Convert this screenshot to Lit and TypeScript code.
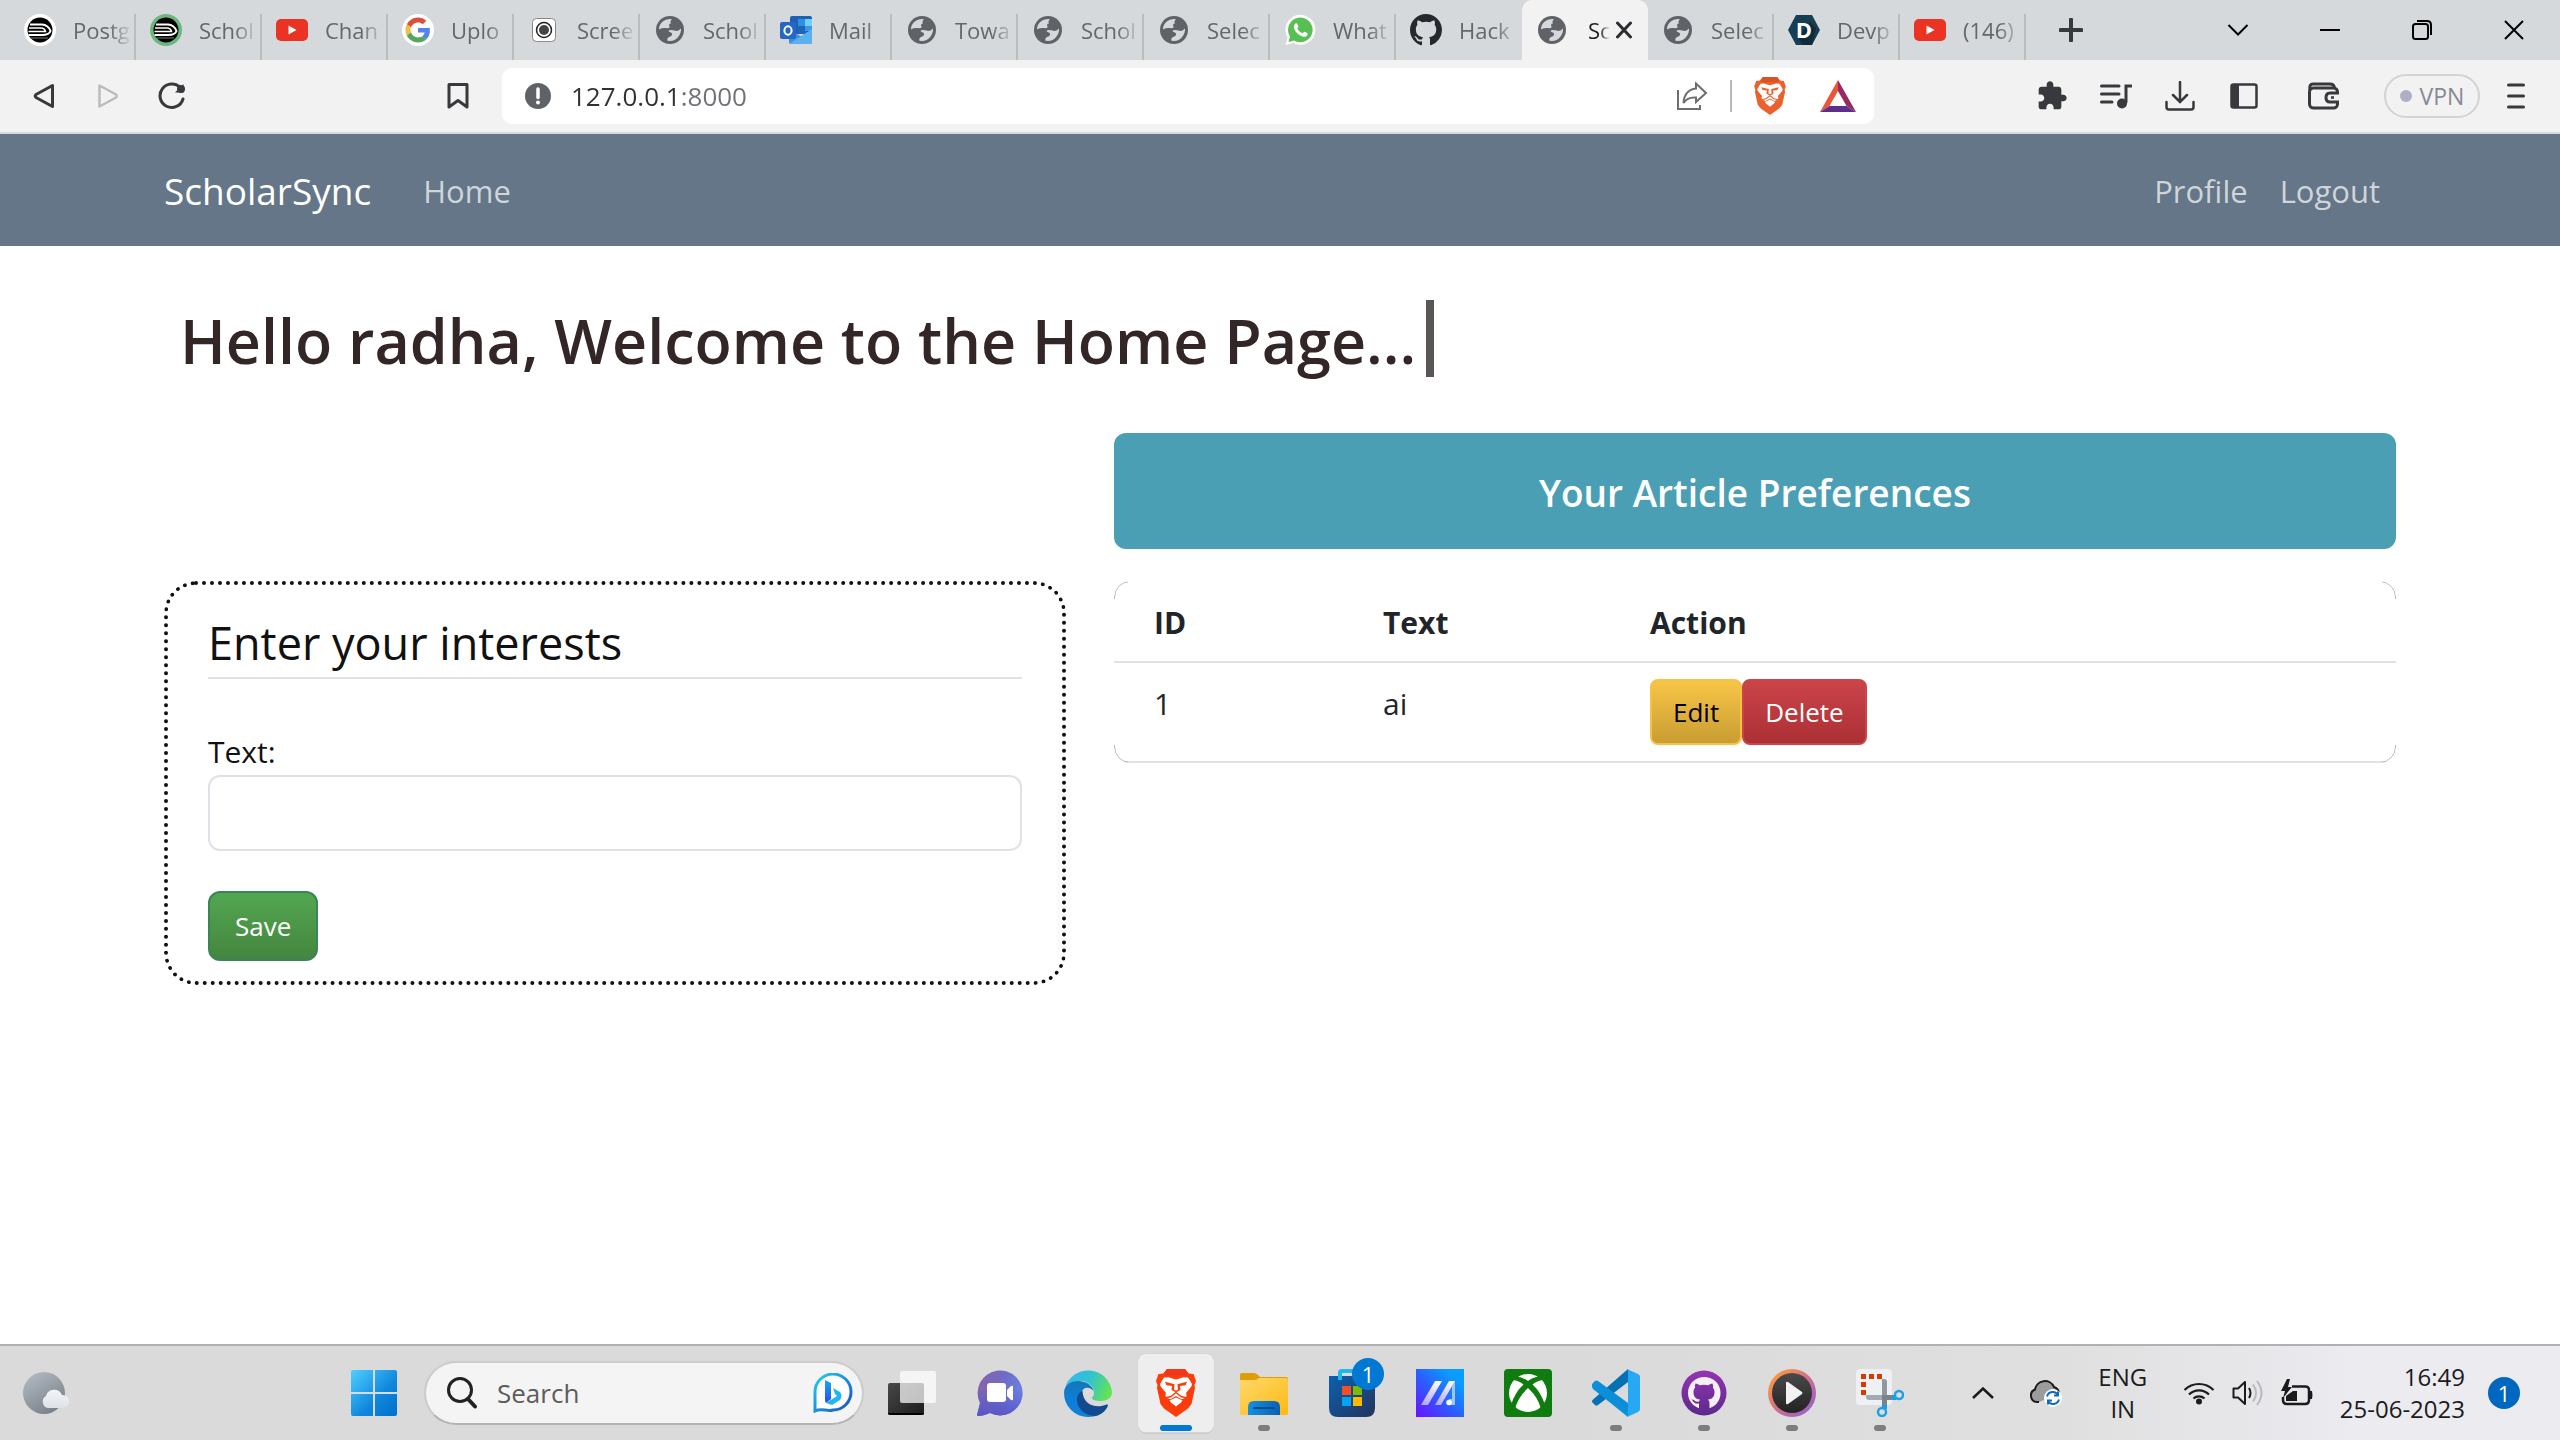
import { LitElement, html, svg, css, type SVGTemplateResult, type TemplateResult } from "lit";
import { customElement, state } from "lit/decorators.js";
import { classMap } from "lit/directives/class-map.js";

const icon = (w: number, h: number, body: SVGTemplateResult, box = `0 0 ${w} ${h}`): TemplateResult =>
  html`<svg width=${w} height=${h} viewBox=${box} fill="none" aria-hidden="true">${body}</svg>`;

/* ---------- shared marks ---------- */

const lionHalf = (fill: string) => svg`
  <path d="M20 10.500L23.500 9.500L27.500 8.300L32 8.500L36 15Q36 17 34.500 18.500L30 24Q31.500 27.500 29 29L25.500 30.200L20 27Z" fill="#fff"/>
  <path d="M20 28.500L26.500 31.500L25 33.500L20 37.500Z" fill="#fff"/>
  <path d="M23 14.800L31 12.800L29.500 16.300L24 17L24.500 21L20 23.500V21.800L22 20.500L21.500 15Z" fill=${fill}/>
  <path d="M20 23.500L25 27.500L31 29" stroke=${fill} stroke-width="1.500"/>`;

const lion = (w: number, h: number, fill: string, crown: string) =>
  icon(w, h, svg`
    <path d="M11 0H29L32.500 4.500L37.500 5L40 12L38.500 16L39 19L35.500 35L32 39.500L20 48L8 39.500L4.500 35L1 19L1.500 16L0 12L2.500 5L7.500 4.500Z" fill=${fill}/>
    <path d="M11 0H29L32.500 4.500L28 7L20 6L12 7L7.500 4.500Z" fill=${crown}/>
    ${lionHalf(fill)}
    <g transform="matrix(-1 0 0 1 40 0)">${lionHalf(fill)}</g>`, "0 0 40 48");

const octocat = svg`<path d="M8 0C3.580 0 0 3.580 0 8c0 3.540 2.290 6.530 5.470 7.590.4.070.550-.170.550-.380 0-.190-.010-.820-.010-1.490-2.010.370-2.530-.490-2.690-.940-.090-.230-.480-.940-.820-1.130-.280-.150-.680-.520-.010-.530.630-.010 1.080.580 1.230.820.720 1.210 1.870.870 2.330.660.070-.520.280-.870.510-1.070-1.780-.200-3.640-.890-3.640-3.950 0-.870.310-1.590.820-2.150-.080-.200-.360-1.020.080-2.120 0 0 .670-.210 2.200.820.640-.180 1.320-.270 2-.270s1.360.090 2 .270c1.530-1.040 2.200-.820 2.200-.820.440 1.100.160 1.920.080 2.120.510.560.820 1.270.820 2.150 0 3.070-1.870 3.750-3.650 3.950.290.250.540.730.540 1.480 0 1.070-.010 1.930-.010 2.200 0 .210.150.460.550.380A8.010 8.010 0 0 0 16 8c0-4.420-3.580-8-8-8z"/>`;

/* ---------- tab icons ---------- */

const train = (ring: string) => icon(32, 32, svg`
  <circle cx="16" cy="16" r="16" fill=${ring}/>
  <circle cx="16" cy="16" r="12.500" fill="#000"/>
  <path d="M6 10.500H18C22 10.500 25.500 13.500 26.500 17C25.500 20 22 21 18 21H4.500" stroke="#fff" stroke-width="2"/>
  <path d="M5 14H17C20 14 21 15.500 21.500 17.500H4.500" stroke="#fff" stroke-width="1.500"/>
  <path d="M6.500 24H24" stroke="#777" stroke-width="1"/>`);

const youtube = icon(32, 32, svg`
  <rect x="0" y="5" width="32" height="22" rx="5" fill="#ea3323"/>
  <path d="M12.500 11.500V20.500L20.500 16Z" fill="#fff"/>`);

const google = icon(32, 32, svg`
  <circle cx="16" cy="16" r="16" fill="#fff"/>
  <g transform="translate(3.500 3.500) scale(.52)">
    <path fill="#d95040" d="M24 9.500c3.540 0 6.710 1.220 9.210 3.600l6.850-6.850C35.900 2.380 30.470 0 24 0 14.620 0 6.510 5.380 2.560 13.220l7.980 6.190C12.430 13.720 17.740 9.500 24 9.500z"/>
    <path fill="#5383ec" d="M46.980 24.550c0-1.570-.15-3.090-.38-4.550H24v9.020h12.940c-.58 2.960-2.260 5.480-4.780 7.180l7.730 6c4.510-4.180 7.090-10.360 7.090-17.650z"/>
    <path fill="#f2be42" d="M10.530 28.590A14.500 14.500 0 0 1 9.770 24c0-1.600.27-3.140.76-4.590l-7.980-6.190A23.900 23.900 0 0 0 0 24c0 3.880.92 7.540 2.560 10.780z"/>
    <path fill="#58a55c" d="M24 48c6.480 0 11.930-2.130 15.890-5.810l-7.730-6c-2.150 1.450-4.920 2.300-8.160 2.300-6.260 0-11.570-4.220-13.470-9.910l-7.980 6.190C6.510 42.620 14.620 48 24 48z"/>
  </g>`);

const recorder = icon(32, 32, svg`
  <rect x="4.500" y="4.500" width="23" height="23" rx="4" fill="#fff" stroke="#888"/>
  <circle cx="16" cy="16" r="7.500" stroke="#222" stroke-width="1.500"/>
  <circle cx="16" cy="16" r="5" fill="#444"/>`);

const globe = icon(32, 32, svg`
  <circle cx="16" cy="16" r="14" fill="#5f6368"/>
  <path d="M5 15.500C5 9.500 10 5 16.500 5L18 5.300C16.500 6.500 16 8 17 9.500C15 9.500 14.500 11 15.500 12.500C16 14 14 14.500 13 14L10 14C7.500 14 6 15 5 15.500Z" fill="#d5d9dc"/>
  <path d="M27 14.500C27.500 20.500 22.500 27 16 27L13.500 26.700C13 24.500 13.500 24 15 23C17 22.500 18.500 21.500 18 19.500C17.500 18 15 18.500 14.500 17C15.500 15.500 18.500 16 20.500 16.500C22.500 17.500 24.500 17 27 14.500Z" fill="#d5d9dc"/>`);

const outlook = icon(32, 32, svg`
  <rect x="10" y="2" width="22" height="18" rx="2" fill="#1f5fb4"/>
  <rect x="18" y="5" width="7" height="7" fill="#2f8fe0"/>
  <rect x="25" y="5" width="7" height="7" fill="#6fd0fa"/>
  <rect x="18" y="12" width="7" height="7" fill="#1e66b8"/>
  <rect x="25" y="12" width="7" height="5" fill="#3a9ae6"/>
  <path d="M9 15L21 22.500L32 15V28Q32 30 30 30H11Q9 30 9 28Z" fill="#3f8fdb"/>
  <path d="M9 30L32 15V28Q32 30 30 30Z" fill="#58b2ee"/>
  <rect x="0" y="8" width="16" height="17" rx="2" fill="#2468c4"/>
  <ellipse cx="8" cy="16.500" rx="3.600" ry="4.200" stroke="#fff" stroke-width="2"/>`);

const whatsapp = icon(32, 32, svg`
  <path d="M1.500 31L3.600 23.500A15 15 0 1 1 9.200 28.900Z" fill="#fff"/>
  <path d="M4.500 28L6 22.500A12.300 12.300 0 1 1 10.200 26.500Z" fill="#58c052"/>
  <path d="M11.500 9.500C12.500 8.800 13 9.200 13.500 10.500L14.400 12.500C14.500 13.300 13.500 14 13.300 14.600C14.500 17 16.500 18.500 18.600 19.200C19.500 18.800 20 17.600 20.700 17.800L23.500 19.200C24 20 23 22.300 21.300 22.700C16.500 23.500 9.500 17 9.900 12.700C10 11.300 10.700 10.100 11.500 9.500Z" fill="#fff"/>`);

const githubMark = icon(32, 32, svg`<g fill="#24292e">${octocat}</g>`, "0 0 16 16");

const devpost = icon(32, 32, svg`
  <path d="M8 1H24L32 16L24 31H8L0 16Z" fill="#173e52"/>
  <path d="M22 8L28 14L24 31H15L10 24Z" fill="#0f2c3d"/>
  <text x="16" y="24" text-anchor="middle" font-family="Open Sans, sans-serif" font-weight="700" font-size="22" fill="#fff">D</text>`);

interface Tab { title: string; icon: TemplateResult; active?: boolean }

const tabs: Tab[] = [
  { title: "Postg", icon: train("#fff") },
  { title: "Schol", icon: train("#6bb87f") },
  { title: "Chan", icon: youtube },
  { title: "Uplo", icon: google },
  { title: "Scree", icon: recorder },
  { title: "Schol", icon: globe },
  { title: "Mail", icon: outlook },
  { title: "Towa", icon: globe },
  { title: "Schol", icon: globe },
  { title: "Selec", icon: globe },
  { title: "What", icon: whatsapp },
  { title: "Hack", icon: githubMark },
  { title: "Sc", icon: globe, active: true },
  { title: "Selec", icon: globe },
  { title: "Devp", icon: devpost },
  { title: "(146)", icon: youtube },
];

/* ---------- browser chrome ---------- */

@customElement("browser-chrome")
export class BrowserChrome extends LitElement {
  static styles = css`
    :host { display: block; font-family: "Open Sans", "Noto Sans", sans-serif; color: #38393d; }
    button { border: 0; background: none; padding: 0; font: inherit; color: inherit; display: grid; place-items: center; }
    svg { display: block; flex: none; }
    .strip { display: flex; height: 60px; background: #d5d9dc; padding-left: 10px; }
    .tab { position: relative; display: flex; align-items: center; justify-content: space-between; width: 126px; height: 60px; padding: 0 6px 0 14px; box-sizing: border-box; color: #64676b; font-size: 22px; flex: none; }
    .tab::after { content: ""; position: absolute; right: 0; top: 14px; bottom: 0; width: 2px; background: #babdbd; }
    .title { flex: 1; min-width: 0; margin-left: 17px; overflow: hidden; white-space: nowrap; text-align: left; line-height: 32px; mask-image: linear-gradient(90deg, #000 36px, transparent 60px); }
    .active { background: #f2f2f2; border-radius: 10px 10px 0 0; color: #1c1d1f; padding-right: 16px; }
    .active::after, .before::after { display: none; }
    .active .title { flex: 0 0 25px; mask-image: linear-gradient(90deg, #000 12px, transparent 22px); }
    .new { width: 90px; height: 60px; }
    .controls { display: flex; margin-left: auto; }
    .controls button { width: 92px; height: 60px; color: #000; }
    .bar { display: flex; align-items: center; height: 72px; background: #f2f2f2; border-bottom: 2px solid #d5d9dc; }
    .nav { display: flex; padding-left: 12px; }
    .nav button { width: 64px; height: 56px; }
    .off { color: #bcbcbe; }
    .mark { width: 48px; height: 56px; margin-left: 230px; }
    .address { display: flex; align-items: center; flex: 1; height: 56px; margin-left: 20px; padding: 0 18px 0 23px; border-radius: 10px; background: #fff; }
    .url { flex: 1; min-width: 0; margin-left: 20px; padding: 0; border: 0; outline: 0; font: 26px/40px "Open Sans", "Noto Sans", sans-serif; color: transparent; background: linear-gradient(90deg, #303134 108px, #6e7175 108px); background-clip: text; -webkit-background-clip: text; }
    .rule { width: 2px; height: 32px; background: #b8b8b8; margin: 0 22px; }
    .bat { margin-left: 34px; }
    .tools { display: flex; align-items: center; margin-left: 146px; padding-right: 8px; }
    .tools button { width: 64px; height: 56px; }
    .tools .wallet { margin-left: 16px; }
    .tools .vpn { display: flex; align-items: center; justify-content: center; gap: 8px; width: 96px; height: 44px; box-sizing: border-box; border: 2px solid #d2d3d9; border-radius: 22px; margin-left: 28px; font-size: 23px; color: #858a94; }
    .dot { width: 12px; height: 12px; border-radius: 50%; background: #adb0c2; }
    .tools .menu { width: 72px; }
  `;

  @state() private current = tabs.findIndex((t) => t.active);

  render() {
    return html`
      <div class="strip">
        ${tabs.map((t, i) => html`
          <button class=${classMap({ tab: true, active: i === this.current, before: i === this.current - 1 })}
            @click=${() => (this.current = i)}>
            ${t.icon}<span class="title">${t.title}</span>
            ${i === this.current ? icon(16, 18, svg`<path d="M1.500 2L14.500 16M14.500 2L1.500 16" stroke="#2b2c2f" stroke-width="3" stroke-linecap="round"/>`) : ""}
          </button>`)}
        <button class="new" aria-label="New tab">${icon(24, 24, svg`<path d="M12 1.500V22.500M1.500 12H22.500" stroke="currentColor" stroke-width="4" stroke-linecap="round"/>`)}</button>
        <div class="controls">
          <button aria-label="Search tabs">${icon(22, 12, svg`<path d="M1.500 1L11 10.500L20.500 1" stroke="currentColor" stroke-width="2"/>`)}</button>
          <button aria-label="Minimize">${icon(20, 20, svg`<path d="M0 10H20" stroke="currentColor" stroke-width="2"/>`)}</button>
          <button aria-label="Restore">${icon(20, 20, svg`<rect x="1" y="4" width="15" height="15" rx="2.500" stroke="currentColor" stroke-width="2"/><path d="M5 1H15Q19 1 19 5V15" stroke="currentColor" stroke-width="2"/>`)}</button>
          <button aria-label="Close">${icon(20, 20, svg`<path d="M1 1L19 19M19 1L1 19" stroke="currentColor" stroke-width="2"/>`)}</button>
        </div>
      </div>
      <div class="bar">
        <div class="nav">
          <button aria-label="Back">${icon(22, 26, svg`<path d="M19.500 2.500V23.500L3 14.500Q1.500 13 3 11.500Z" stroke="currentColor" stroke-width="3" stroke-linejoin="round"/>`)}</button>
          <button class="off" aria-label="Forward">${icon(22, 26, svg`<path d="M2.500 2.500V23.500L19 14.500Q20.500 13 19 11.500Z" stroke="currentColor" stroke-width="2.500" stroke-linejoin="round"/>`)}</button>
          <button aria-label="Reload">${icon(28, 28, svg`<path d="M25 17A11.700 11.700 0 1 1 22.500 6" stroke="currentColor" stroke-width="3" stroke-linecap="round"/><path d="M25.500 2V10.500H17" fill="currentColor"/><circle cx="23" cy="7" r="4" fill="currentColor"/>`)}</button>
        </div>
        <button class="mark" aria-label="Bookmark">${icon(22, 26, svg`<path d="M2 1.500H20V24L11 17.500L2 24Z" stroke="currentColor" stroke-width="3" stroke-linejoin="round"/>`)}</button>
        <div class="address">
          ${icon(26, 26, svg`<circle cx="13" cy="13" r="13" fill="#5f6368"/><path d="M13 6V14.500" stroke="#fff" stroke-width="3.500" stroke-linecap="round"/><circle cx="13" cy="19.500" r="2" fill="#fff"/>`)}
          <input class="url" aria-label="Address" value="127.0.0.1:8000" />
          ${icon(32, 30, svg`<path d="M2 9V28H24V24" stroke="#6e6e70" stroke-width="2"/><path d="M20 2.500L30 12L20 21V16.500C14 16 10 18 7.500 22C8 14 12 8.500 20 7.500Z" stroke="#6e6e70" stroke-width="2"/>`)}
          <span class="rule"></span>
          ${lion(32, 38, "#eb602c", "#d9541f")}
          <span class="bat">${icon(36, 32, svg`<path d="M18 0L0 32L9.500 26L18 11Z" fill="#ea5637"/><path d="M18 0L36 32L26.500 26L18 11Z" fill="#952b62"/><path d="M0 32H36L26.500 26H9.500Z" fill="#5f2d8c"/>`)}</span>
        </div>
        <div class="tools">
          <button aria-label="Extensions">${icon(32, 32, svg`<path fill="currentColor" d="M20.500 11H19V7c0-1.100-.9-2-2-2h-4V3.500C13 2.120 11.880 1 10.500 1S8 2.120 8 3.500V5H4c-1.100 0-1.990.9-1.990 2v3.800H3.500c1.490 0 2.700 1.210 2.700 2.700s-1.210 2.700-2.700 2.700H2V20c0 1.100.9 2 2 2h3.800v-1.500c0-1.490 1.210-2.700 2.700-2.700 1.490 0 2.700 1.210 2.700 2.700V22H17c1.100 0 2-.9 2-2v-4h1.500c1.380 0 2.500-1.120 2.500-2.500S21.880 11 20.500 11z"/>`, "0 0 24 24")}</button>
          <button aria-label="Media">${icon(32, 26, svg`<path d="M1.500 3H19M1.500 11H19M1.500 19H12M26 19V3H31" stroke="currentColor" stroke-width="3" stroke-linecap="round"/><circle cx="22" cy="20.500" r="5" fill="currentColor"/>`)}</button>
          <button aria-label="Downloads">${icon(30, 30, svg`<path d="M15 1V20M8 14L15 21L22 14M1.500 21V26Q1.500 28.500 4 28.500H26Q28.500 28.500 28.500 26V21" stroke="currentColor" stroke-width="2.500" stroke-linecap="round"/>`)}</button>
          <button aria-label="Sidebar">${icon(28, 26, svg`<rect x="1.500" y="1.500" width="25" height="23" rx="2" stroke="currentColor" stroke-width="2.500"/><path d="M2 2H9V24H2Z" fill="currentColor"/>`)}</button>
          <button class="wallet" aria-label="Wallet">${icon(32, 28, svg`<rect x="1.500" y="6" width="28" height="20" rx="4" stroke="currentColor" stroke-width="3"/><path d="M2 8Q1 2 5 2H22Q26 2 26.500 6" stroke="currentColor" stroke-width="3"/><path d="M31 11H22Q18 11 18 15.500T22 20H31" fill="#f2f2f2" stroke="currentColor" stroke-width="3"/><path d="M23 15.500H26" stroke="currentColor" stroke-width="2.500"/>`)}</button>
          <button class="vpn"><span class="dot"></span>VPN</button>
          <button class="menu" aria-label="Menu">${icon(18, 26, svg`<path d="M1.500 2H16.500M1.500 13H16.500M1.500 24H16.500" stroke="currentColor" stroke-width="3" stroke-linecap="round"/>`)}</button>
        </div>
      </div>`;
  }
}

/* ---------- site ---------- */

@customElement("scholar-page")
export class ScholarPage extends LitElement {
  static styles = css`
    :host { display: block; font-family: "Open Sans", "Noto Sans", sans-serif; font-size: 30px; line-height: 48px; color: #212529; background: #fff; }
    a { text-decoration: none; }
    .navbar { display: flex; align-items: center; height: 112px; box-sizing: border-box; padding: 2px 164px 0; background: #647687; }
    .brand { font-size: 37px; color: #fff; margin-right: 36px; }
    .link { padding: 0 16px; font-size: 31px; color: #cfd5da; }
    .user { display: flex; margin-left: auto; }
    main { padding: 54px 164px; }
    h1 { display: inline-block; margin: 0 0 0 16px; padding: 4px 10px 0 0; border-right: 8px solid #5b5656; font-size: 61px; line-height: 73px; font-weight: 600; color: #322626; white-space: nowrap; }
    .row { display: grid; grid-template-columns: repeat(12, 1fr); column-gap: 48px; align-items: start; margin-top: 56px; }
    .entry { grid-column: span 5; margin-top: 148px; padding: 24px 40px 20px; border: 4px dotted #111; border-radius: 32px; color: #111; }
    .legend { margin: 0 0 50px; font-size: 45px; line-height: 68px; font-weight: 400; border-bottom: 2px solid #dee2e6; }
    label { display: block; line-height: 46px; }
    .field { display: block; width: 100%; height: 76px; box-sizing: border-box; padding: 12px 24px; border: 2px solid #dee2e6; border-radius: 12px; font: inherit; color: inherit; background: #fff; }
    .btn { display: inline-block; font: 26px/42px "Open Sans", "Noto Sans", sans-serif; border: 2px solid; border-radius: 8px; padding: 10px 21px; }
    .save { margin-top: 40px; padding: 12px 25px; border-radius: 12px; border-color: #3a8557; color: #fff; background: linear-gradient(#53a751, #44863f); }
    .prefs { grid-column: span 7; }
    .banner { margin: 0 0 32px; padding: 36px 0 32px; border-radius: 12px; background: #4a9fb5; color: #fff; text-align: center; font-size: 37px; line-height: 48px; font-weight: 600; }
    .frame { position: relative; border-radius: 16px; overflow: hidden; }
    .frame::after { content: ""; position: absolute; inset: 0; border: 1px solid #b5b5b5; border-radius: 16px; pointer-events: none; --c: linear-gradient(#000 0 0) no-repeat; mask: var(--c) 0 0 / 14px 18px, var(--c) 100% 0 / 14px 18px, var(--c) 0 100% / 14px 18px, var(--c) 100% 100% / 14px 18px; }
    table { width: 100%; border-collapse: separate; border-spacing: 0; }
    th, td { text-align: left; vertical-align: top; padding: 16px 40px; border-bottom: 2px solid #dee2e6; }
    th { padding: 18px 40px 14px; }
    td { line-height: 50px; }
    .id { width: 149px; }
    .text { width: 187px; }
    .actions { display: flex; }
    .edit { border-color: #f7c244; background: linear-gradient(#f7c546, #c99d33); color: #000; }
    .delete { border-color: #cb444a; background: linear-gradient(#cb444a, #ab3034); color: #fff; }
  `;

  @state() private rows = [{ id: 1, text: "ai" }];

  render() {
    return html`
      <nav class="navbar">
        <a class="brand" href="#">ScholarSync</a>
        <a class="link" href="#">Home</a>
        <div class="user"><a class="link" href="#">Profile</a><a class="link" href="#">Logout</a></div>
      </nav>
      <main>
        <h1>Hello radha, Welcome to the Home Page...</h1>
        <div class="row">
          <form class="entry" @submit=${(e: Event) => e.preventDefault()}>
            <h2 class="legend">Enter your interests</h2>
            <label for="interest">Text:</label>
            <input class="field" id="interest" type="text" />
            <button class="btn save" type="submit">Save</button>
          </form>
          <section class="prefs">
            <h2 class="banner">Your Article Preferences</h2>
            <div class="frame">
              <table>
                <thead><tr><th class="id">ID</th><th class="text">Text</th><th>Action</th></tr></thead>
                <tbody>
                  ${this.rows.map((r) => html`<tr><td>${r.id}</td><td>${r.text}</td>
                    <td><div class="actions"><button class="btn edit">Edit</button><button class="btn delete">Delete</button></div></td></tr>`)}
                </tbody>
              </table>
            </div>
          </section>
        </div>
      </main>`;
  }
}

/* ---------- taskbar ---------- */

const weather = icon(48, 48, svg`
  <defs><linearGradient id="w1" x1="0" y1="0" x2=".6" y2="1"><stop stop-color="#b6bfc8"/><stop offset="1" stop-color="#7b828a"/></linearGradient>
  <linearGradient id="w2" x1="0" y1="0" x2="0" y2="1"><stop stop-color="#f4f6f8"/><stop offset="1" stop-color="#dde2e8"/></linearGradient></defs>
  <circle cx="22" cy="24" r="21" fill="url(#w1)"/>
  <path d="M26 39A6.500 6.500 0 0 1 24 27A8.500 8.500 0 0 1 40 26A6.500 6.500 0 0 1 41 39Z" fill="url(#w2)"/>`);

const start = icon(46, 46, svg`
  <defs><linearGradient id="s1" gradientUnits="userSpaceOnUse" x1="0" y1="0" x2="46" y2="46"><stop stop-color="#4fd0ff"/><stop offset=".6" stop-color="#0f86dc"/><stop offset="1" stop-color="#0070cc"/></linearGradient></defs>
  <path d="M2 0H22V22H0V2Q0 0 2 0ZM24 0H44Q46 0 46 2V22H24ZM0 24H22V46H2Q0 46 0 44ZM24 24H46V44Q46 46 44 46H24Z" fill="url(#s1)"/>`);

const bing = icon(40, 40, svg`
  <defs><linearGradient id="b1" x1="0" y1="0" x2="1" y2="1"><stop stop-color="#1fd3ee"/><stop offset="1" stop-color="#1b4ec2"/></linearGradient>
  <linearGradient id="b2" x1="0" y1="0" x2="0" y2="1"><stop stop-color="#1aa7f2"/><stop offset="1" stop-color="#2350e0"/></linearGradient></defs>
  <path d="M2 38L2 19A18 18 0 1 1 20 37C14 39 9 34.500 2 38Z" fill="#fff" stroke="url(#b1)" stroke-width="3"/>
  <path d="M12 7L18 10V26L13 30Q12 29 12 27Z" fill="url(#b2)"/>
  <path d="M20 15L27 19Q30 22 27 27L19 32L13 30L24 23L22 21Z" fill="#22b6f0"/>`);

const taskView = icon(48, 48, svg`
  <defs><linearGradient id="t1" x1="0" y1="0" x2="1" y2="1"><stop stop-color="#484848"/><stop offset="1" stop-color="#1c1c1c"/></linearGradient></defs>
  <rect x="0" y="14" width="36" height="32" rx="2" fill="url(#t1)"/>
  <path d="M0 44H36Q36 46 34 46H2Q0 46 0 44Z" fill="#000"/>
  <rect x="12" y="2" width="36" height="32" rx="2" fill="#fff" fill-opacity=".72"/>`);

const chat = icon(48, 48, svg`
  <defs><linearGradient id="c1" x1="0" y1=".2" x2="1" y2=".6"><stop stop-color="#8c62a8"/><stop offset=".5" stop-color="#6d6cc6"/><stop offset="1" stop-color="#6a86ea"/></linearGradient>
  <linearGradient id="c2" x1="0" y1="0" x2="0" y2="1"><stop offset=".4" stop-color="#5a55c5" stop-opacity="0"/><stop offset="1" stop-color="#5a55c5"/></linearGradient></defs>
  <path d="M1 46L4 34A22.500 22.500 0 1 1 14 44Q7 47 2.500 47Q1 47 1 46Z" fill="url(#c1)"/>
  <path d="M1 46L4 34A22.500 22.500 0 1 1 14 44Q7 47 2.500 47Q1 47 1 46Z" fill="url(#c2)"/>
  <rect x="11" y="14" width="19" height="19" rx="3" fill="#fff"/>
  <path d="M31 21L35 17Q37 16 37 18V30Q37 32 35 31L31 27Z" fill="#fff"/>`);

const edge = icon(48, 48, svg`
  <defs><linearGradient id="e1" x1="0" y1=".2" x2="1" y2=".5"><stop stop-color="#38b6f5"/><stop offset=".5" stop-color="#32c2d0"/><stop offset="1" stop-color="#63e356"/></linearGradient>
  <linearGradient id="e2" x1="0" y1="0" x2="0" y2="1"><stop stop-color="#1477b8"/><stop offset=".6" stop-color="#0c7fdc"/><stop offset="1" stop-color="#1280d8"/></linearGradient></defs>
  <path d="M1 19A24 24 0 0 1 48 23C48 29 43 32 37 32C32 32 28 31 28 29C28 28 30 27 30 24C30 18 25 13 18 12C10 11.500 4 14 1 19Z" fill="url(#e1)"/>
  <path d="M0 24C0 16 7 11.500 15 12C24 12.500 29 18 29.500 22C27 17.500 18 17 18 24C17.500 33 24 42 35 46Q30 48 24 48A24 24 0 0 1 0 24Z" fill="url(#e2)"/>
  <path d="M18.500 22C13 24 12 30 14 36C17 43 24 47 31 47C37 46 42 42 44 36.500Q44 35 42.500 35.500C32 40 19 36 18.500 22Z" fill="#114a8f"/>`);

const folder = icon(48, 48, svg`
  <defs><linearGradient id="f1" x1="0" y1="0" x2="1" y2="1"><stop stop-color="#ffd86b"/><stop offset="1" stop-color="#fbba12"/></linearGradient>
  <linearGradient id="f2" x1="0" y1="0" x2="1" y2="0"><stop stop-color="#1490df"/><stop offset="1" stop-color="#0c5fb0"/></linearGradient></defs>
  <path d="M0 6Q0 4 2 4H14Q16 4 18 6L20 8H46Q48 8 48 10V16H0Z" fill="#dd9e06"/>
  <path d="M0 11H14Q17 11 19 9H46Q48 9 48 11V44Q48 46 46 46H2Q0 46 0 44Z" fill="url(#f1)"/>
  <path d="M8 46V38Q8 32 14 32H34Q40 32 40 38V46Z" fill="url(#f2)"/>
  <path d="M14 39H34" stroke="#0a4a94" stroke-width="2" stroke-linecap="round"/>`);

const store = icon(48, 48, svg`
  <defs><linearGradient id="m1" x1="0" y1="0" x2="1" y2="1"><stop stop-color="#0c60b0"/><stop offset="1" stop-color="#24345c"/></linearGradient></defs>
  <path d="M1 7H47V39Q47 48 38 48H10Q1 48 1 39Z" fill="url(#m1)"/>
  <path d="M12 11V4Q12 2 14 2H34" stroke="#1cb8f0" stroke-width="4"/>
  <rect x="14" y="17" width="9" height="9" fill="#f25022"/><rect x="25" y="17" width="9" height="9" fill="#7fba00"/>
  <rect x="14" y="28" width="9" height="9" fill="#00a4ef"/><rect x="25" y="28" width="9" height="9" fill="#ffb900"/>`);

const armoury = icon(48, 48, svg`
  <defs><linearGradient id="a1" x1="0" y1="1" x2="1" y2="0"><stop stop-color="#6a10ff"/><stop offset=".45" stop-color="#2c5cff"/><stop offset=".8" stop-color="#0a9cff"/></linearGradient>
  <linearGradient id="a2" x1="0" y1="0" x2="0" y2="1"><stop stop-color="#fff"/><stop offset="1" stop-color="#b3a6f7"/></linearGradient></defs>
  <rect width="48" height="48" fill="url(#a1)"/>
  <path d="M19 12H26L12 36H5Z" fill="url(#a2)"/><path d="M33 12H39L25 36H19Z" fill="url(#a2)"/>
  <path d="M36 17L39 12V36H31L33 30H36Z" fill="#9fc4fb"/><circle cx="33" cy="33.500" r="2.800" fill="#fff"/>`);

const xbox = icon(48, 48, svg`
  <rect width="48" height="48" rx="4" fill="#107c10"/><circle cx="24" cy="24" r="19" fill="#fff"/>
  <path d="M11 8Q17 7 24 12Q31 7 37 8L40 11Q34 11 28.500 15.500Q37 23 41 36L37 40Q34 28 24 19Q14 28 11 40L7 36Q11 23 19.500 15.500Q14 11 8 11Z" fill="#107c10"/>`);

const vscode = icon(48, 48, svg`
  <path d="M36 0L.5 31Q-.5 32.500 .5 33.500L3 36Q4 37.500 6 36L36 13Z" fill="#0570b4"/>
  <path d="M1 20L36 48V34L6 12Q4 11 3 12L.5 14.500Q-1 17 1 20Z" fill="#0a8fd8"/>
  <path d="M35 0L46 5Q48 6 48 8V40Q48 42 46 43L35 48Q36 47 36 45V3Q36 1 35 0Z" fill="#26a9f2"/>`);

const githubApp = icon(48, 48, svg`
  <defs><linearGradient id="g1" x1="0" y1="0" x2="0" y2="1"><stop stop-color="#9534b2"/><stop offset="1" stop-color="#5b2a8c"/></linearGradient></defs>
  <circle cx="24" cy="24" r="22.500" fill="url(#g1)"/>
  <path fill="#f3f0f7" fill-rule="evenodd" d="M24 8A16 16 0 0 0 19 39.200V34.500C14 35.500 13 31.500 11.500 30.500C14 30 15 33.500 19 32.500L20 30.500C15 30 13.500 27 13.500 23C13.500 21 14.300 19.500 15.200 18.500Q14.500 16.500 15.500 14.500Q17.500 14.500 19.800 16.300Q24 15.300 28.200 16.300Q30.500 14.500 32.500 14.500Q33.500 16.500 32.800 18.500C33.700 19.500 34.500 21 34.500 23C34.500 27 33 30 28 30.500Q29.500 32 29.500 34V39.200A16 16 0 0 0 24 8Z"/>`);

const player = icon(48, 48, svg`
  <defs><linearGradient id="p1" x1="0" y1="0" x2="1" y2="1"><stop offset=".1" stop-color="#ff9a3c"/><stop offset=".5" stop-color="#d0708a"/><stop offset="1" stop-color="#8a5cd8"/></linearGradient>
  <linearGradient id="p2" x1="0" y1="0" x2="0" y2="1"><stop stop-color="#4a4a4a"/><stop offset="1" stop-color="#222"/></linearGradient></defs>
  <circle cx="24" cy="24" r="24" fill="url(#p1)"/><circle cx="24" cy="24" r="20" fill="url(#p2)"/>
  <path d="M18 14Q18 12 20 13L34 23Q35 24 34 25L20 35Q18 36 18 34Z" fill="#f2f2f2"/>`);

const snip = icon(48, 48, svg`
  <rect width="36" height="36" rx="4" fill="#eef1f4"/>
  <path d="M5 5H10V10H5ZM13 5H18V10H13ZM21 5H26V10H21ZM5 13H10V18H5ZM5 21H10V26H5Z" fill="#d83b01"/>
  <path d="M26 10H28Q31 10 31 13V36H26Z" fill="#8f979f"/><path d="M10 26H36V31H13Q10 31 10 28Z" fill="#a3aab1"/>
  <path d="M26 26H36V31H31V36H26Z" fill="#7a828a"/>
  <path d="M36 28.500H40M28.500 36V40" stroke="#1b9de2" stroke-width="5"/>
  <circle cx="43" cy="26" r="4" stroke="#1ea0e4" stroke-width="2.500"/><circle cx="26" cy="43" r="4" stroke="#1ea0e4" stroke-width="2.500"/>`);

interface App { name: string; icon: TemplateResult; open?: boolean; active?: boolean; badge?: string }

const apps: App[] = [
  { name: "Task view", icon: taskView },
  { name: "Chat", icon: chat },
  { name: "Edge", icon: edge },
  { name: "Brave", icon: lion(40, 48, "#fb3d0b", "#f0361c"), open: true, active: true },
  { name: "Files", icon: folder, open: true },
  { name: "Store", icon: store, badge: "1" },
  { name: "MyASUS", icon: armoury },
  { name: "Xbox", icon: xbox },
  { name: "Code", icon: vscode, open: true },
  { name: "GitHub Desktop", icon: githubApp, open: true },
  { name: "Media Player", icon: player, open: true },
  { name: "Snipping Tool", icon: snip, open: true },
];

@customElement("task-bar")
export class TaskBar extends LitElement {
  static styles = css`
    :host { display: flex; align-items: center; height: 94px; border-top: 2px solid #b1b1b2; background: linear-gradient(90deg, #dadada 60%, #dfdfdf 80%, #ebebf0 92%); font-family: "Open Sans", "Noto Sans", sans-serif; font-size: 24px; line-height: 32px; color: #1b1b1b; }
    button { border: 0; background: none; padding: 0; font: inherit; color: inherit; display: grid; place-items: center; flex: none; }
    svg { display: block; flex: none; }
    .weather { width: 48px; height: 80px; margin-left: 22px; }
    .start { width: 88px; height: 80px; margin-left: 260px; }
    .search { display: flex; align-items: center; width: 440px; height: 64px; box-sizing: border-box; margin: 0 4px 0 6px; padding: 0 9px 0 21px; border: 2px solid #cbcbcb; border-bottom-color: #b4b4b4; border-radius: 32px; background: #f4f4f4; }
    .query { flex: 1; min-width: 0; margin-left: 20px; padding: 0; border: 0; outline: 0; background: none; font: 26px/40px "Open Sans", "Noto Sans", sans-serif; color: #1b1b1b; }
    .query::placeholder { color: #5c5c5c; opacity: 1; }
    .apps { display: flex; }
    .app { position: relative; width: 76px; height: 78px; margin: 0 6px; border-radius: 8px; }
    .active { background: #eeeeee; box-shadow: 0 0 0 1px #d6d6d6, 0 2px 0 #cccccc; }
    .app::after { content: ""; position: absolute; left: 50%; bottom: 1px; width: 12px; height: 6px; margin-left: -6px; border-radius: 3px; }
    .open::after { background: #7d7d7d; }
    .active::after { width: 32px; margin-left: -16px; background: #0078d4; }
    .badge { position: absolute; right: 6px; top: 4px; width: 32px; height: 32px; border-radius: 50%; background: #0078d4; color: #fff; text-align: center; font-size: 22px; }
    .tray { display: flex; align-items: center; margin-left: auto; padding-right: 40px; }
    .more { width: 48px; height: 80px; }
    .cloud { width: 78px; height: 80px; }
    .lang { width: 76px; text-align: center; }
    .status { display: flex; align-items: center; gap: 17px; padding: 0 27px 0 22px; height: 80px; }
    .lang, .clock { display: block; }
    .clock { text-align: right; }
    .note { width: 32px; height: 32px; margin-left: 23px; border-radius: 50%; background: #0067c0; color: #fff; font-size: 22px; }
  `;

  render() {
    return html`
      <button class="weather" aria-label="Weather">${weather}</button>
      <button class="start" aria-label="Start">${start}</button>
      <div class="search">
        ${icon(30, 32, svg`<circle cx="13" cy="13" r="11.500" stroke="#222" stroke-width="3"/><path d="M21 22L28 29.500" stroke="#222" stroke-width="4" stroke-linecap="round"/>`)}
        <input class="query" type="search" aria-label="Search" placeholder="Search" />
        ${bing}
      </div>
      <div class="apps">
        ${apps.map((a) => html`
          <button class=${classMap({ app: true, open: !!a.open, active: !!a.active })} aria-label=${a.name}>
            ${a.icon}${a.badge ? html`<span class="badge">${a.badge}</span>` : ""}
          </button>`)}
      </div>
      <div class="tray">
        <button class="more" aria-label="Hidden icons">${icon(22, 12, svg`<path d="M1 11L11 1.500L21 11" stroke="#1b1b1b" stroke-width="2.500"/>`)}</button>
        <button class="cloud" aria-label="OneDrive">${icon(32, 28, svg`
          <path d="M9 23H7A6.500 6.500 0 0 1 5 10.500A10 10 0 0 1 24 8Q29 10 29 15" fill="#9c9c9c" stroke="#1b1b1b" stroke-width="2"/>
          <circle cx="23" cy="19" r="9" fill="#fff"/>
          <path d="M17 17.500A6 6 0 0 1 28 16M28 12.500V16.500H24M29 20.500A6 6 0 0 1 18 22M18 25.500V21.500H22" stroke="#0f6cbd" stroke-width="2"/>`)}</button>
        <button class="lang">ENG<br />IN</button>
        <button class="status" aria-label="Network, sound and battery">
          ${icon(32, 24, svg`<path d="M1.500 9A20.500 20.500 0 0 1 30.500 9M6 13.500A14 14 0 0 1 26 13.500M10.500 17.500A8 8 0 0 1 21.500 17.500" stroke="#1b1b1b" stroke-width="2.200"/><circle cx="16" cy="20.500" r="3" fill="#1b1b1b"/>`)}
          ${icon(32, 28, svg`<path d="M1.500 9.500H6L13 3V25L6 18.500H1.500Z" stroke="#1b1b1b" stroke-width="2" stroke-linejoin="round"/><path d="M17 9Q20 14 17 19" stroke="#1b1b1b" stroke-width="2"/><path d="M21 5.500Q27 14 21 22.500M25 2Q34 14 25 26" stroke="#bababc" stroke-width="2"/>`)}
          ${icon(32, 28, svg`<path d="M11 7.500H24Q28 7.500 28 11V21Q28 25 24 25H6Q2 25 2 21V18" stroke="#1b1b1b" stroke-width="2.500"/><path d="M29 12H31Q32 16 31 20H29ZM5 17L12 12H16V22H5Z" fill="#1b1b1b"/><path d="M6 0L0 12H4L2 19L11 8H7L9 0Z" fill="#1b1b1b"/>`)}
        </button>
        <button class="clock">16:49<br />25-06-2023</button>
        <button class="note">1</button>
      </div>`;
  }
}

@customElement("app-root")
export class AppRoot extends LitElement {
  static styles = css`
    :host { display: flex; flex-direction: column; min-height: 100vh; background: #fff; }
    .page { flex: 1; }
  `;

  render() {
    return html`<browser-chrome></browser-chrome><scholar-page class="page"></scholar-page><task-bar></task-bar>`;
  }
}
